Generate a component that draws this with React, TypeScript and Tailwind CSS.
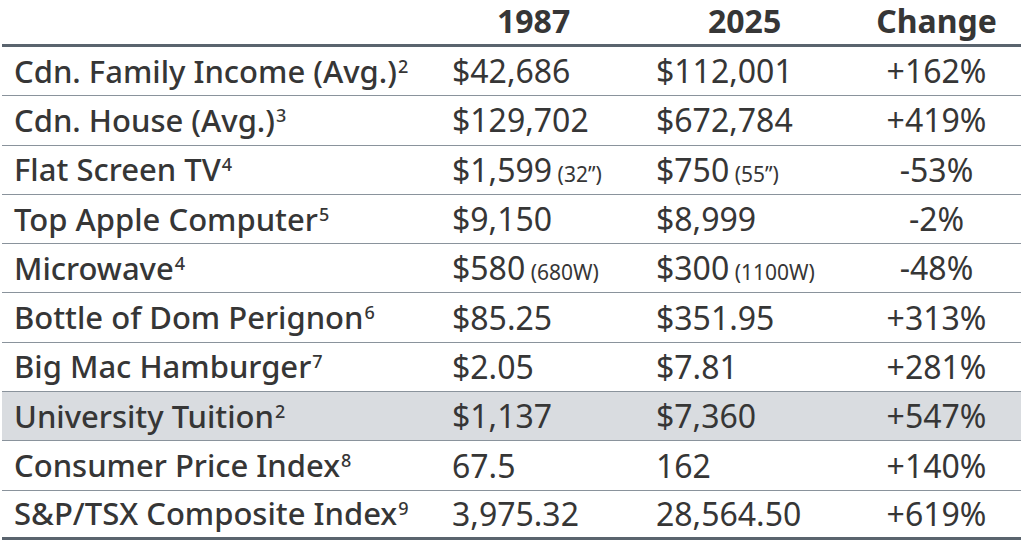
import React from "react"

type Row = {
  label: string
  note: string
  y1987: string
  y1987Sub?: string
  y2025: string
  y2025Sub?: string
  change: string
  shaded?: boolean
  last?: boolean
}

const rows: Row[] = [
  { label: "Cdn. Family Income (Avg.)", note: "2", y1987: "$42,686", y2025: "$112,001", change: "+162%" },
  { label: "Cdn. House (Avg.)", note: "3", y1987: "$129,702", y2025: "$672,784", change: "+419%" },
  { label: "Flat Screen TV", note: "4", y1987: "$1,599", y1987Sub: "(32\u201D)", y2025: "$750", y2025Sub: "(55\u201D)", change: "-53%" },
  { label: "Top Apple Computer", note: "5", y1987: "$9,150", y2025: "$8,999", change: "-2%" },
  { label: "Microwave", note: "4", y1987: "$580", y1987Sub: "(680W)", y2025: "$300", y2025Sub: "(1100W)", change: "-48%" },
  { label: "Bottle of Dom Perignon", note: "6", y1987: "$85.25", y2025: "$351.95", change: "+313%" },
  { label: "Big Mac Hamburger", note: "7", y1987: "$2.05", y2025: "$7.81", change: "+281%" },
  { label: "University Tuition", note: "2", y1987: "$1,137", y2025: "$7,360", change: "+547%", shaded: true },
  { label: "Consumer Price Index", note: "8", y1987: "67.5", y2025: "162", change: "+140%" },
  { label: "S&P/TSX Composite Index", note: "9", y1987: "3,975.32", y2025: "28,564.50", change: "+619%", last: true },
]

function Value({ main, sub }: { main: string; sub?: string }) {
  return (
    <span>
      {main}
      {sub && <span className="text-[21px]"> {sub}</span>}
    </span>
  )
}

export default function App() {
  return (
    <div
      className="h-[545px] w-[1024px] overflow-hidden bg-white text-[#363636]"
      style={{ fontFamily: '"Noto Sans", "Open Sans", sans-serif' }}
    >
      <div className="ml-[2px] mr-[3px]">
        {/* header */}
        <div className="grid h-[47px] grid-cols-[448px_200px_202px_1fr] items-center border-b-[3px] border-[#5a646e] pb-[3px] text-[32px] font-bold leading-none">
          <div />
          <div className="pl-[47px]">1987</div>
          <div className="pl-[58px]">2025</div>
          <div className="text-center">Change</div>
        </div>
        {rows.map((r) => (
          <div
            key={r.label}
            className={`grid h-[49.3px] grid-cols-[448px_200px_202px_1fr] items-center text-[32px] leading-none ${
              r.shaded ? "bg-[#d9dce0]" : ""
            } ${r.last ? "border-b-[3px] border-[#5a646e]" : "border-b border-[#8a939c]"}`}
          >
            <div className="whitespace-nowrap pl-3 text-[31px] font-medium">
              {r.label}
              <sup className="relative -top-[10px] ml-[1px] align-baseline text-[18px] font-medium">{r.note}</sup>
            </div>
            <div className="whitespace-nowrap pl-[2px]">
              <Value main={r.y1987} sub={r.y1987Sub} />
            </div>
            <div className="whitespace-nowrap pl-[6px]">
              <Value main={r.y2025} sub={r.y2025Sub} />
            </div>
            <div className="text-center">{r.change}</div>
          </div>
        ))}
      </div>
    </div>
  )
}
